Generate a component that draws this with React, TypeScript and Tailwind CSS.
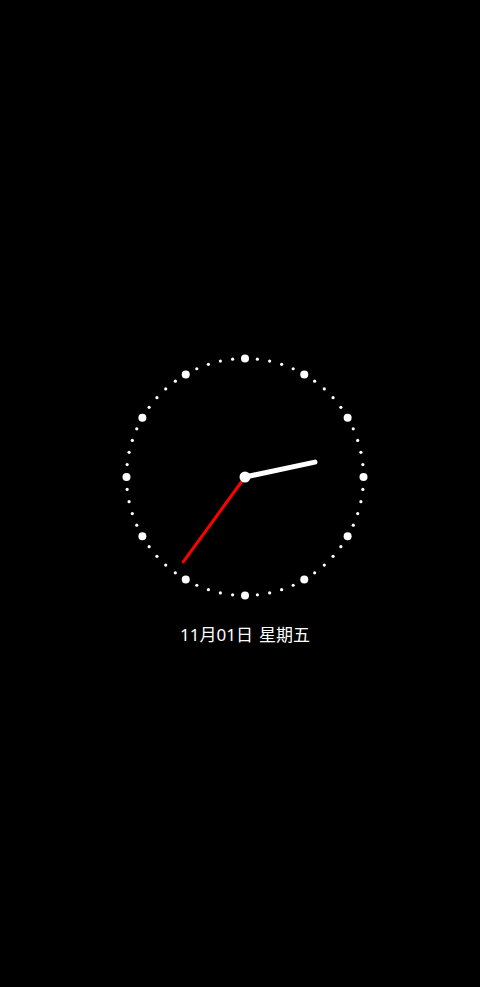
import React from 'react';

const CX = 125;
const CY = 125;
const R = 118.5;

const hourAngle = 78;
const minuteAngle = 216;

function point(angle: number, len: number) {
  const rad = (angle * Math.PI) / 180;
  return { x: CX + Math.sin(rad) * len, y: CY - Math.cos(rad) * len };
}

const Dial: React.FC = () => {
  const dots = Array.from({ length: 60 }, (_, i) => {
    const p = point(i * 6, R);
    const major = i % 5 === 0;
    return <circle key={i} cx={p.x} cy={p.y} r={major ? 4 : 1.6} fill="#fff" />;
  });
  const h = point(hourAngle, 71.5);
  const m = point(minuteAngle, 105);
  return (
    <svg width="250" height="250" viewBox="0 0 250 250">
      {dots}
      <line x1={CX} y1={CY} x2={m.x} y2={m.y} stroke="#ff0000" strokeWidth="3" strokeLinecap="round" />
      <line x1={CX} y1={CY} x2={h.x} y2={h.y} stroke="#fff" strokeWidth="5" strokeLinecap="round" />
      <circle cx={CX} cy={CY} r="5.5" fill="#fff" />
    </svg>
  );
};

export default function App() {
  return (
    <div className="w-[480px] h-[987px] bg-black flex flex-col items-center pt-[352px] pl-[10px]">
      <Dial />
      <div
        className="mt-[20px] flex gap-[6px] text-[17px] leading-[26px] text-white"
        style={{ fontFamily: '"Noto Sans", "Noto Sans CJK SC", sans-serif' }}
      >
        <span>11月01日</span>
        <span>星期五</span>
      </div>
    </div>
  );
}
